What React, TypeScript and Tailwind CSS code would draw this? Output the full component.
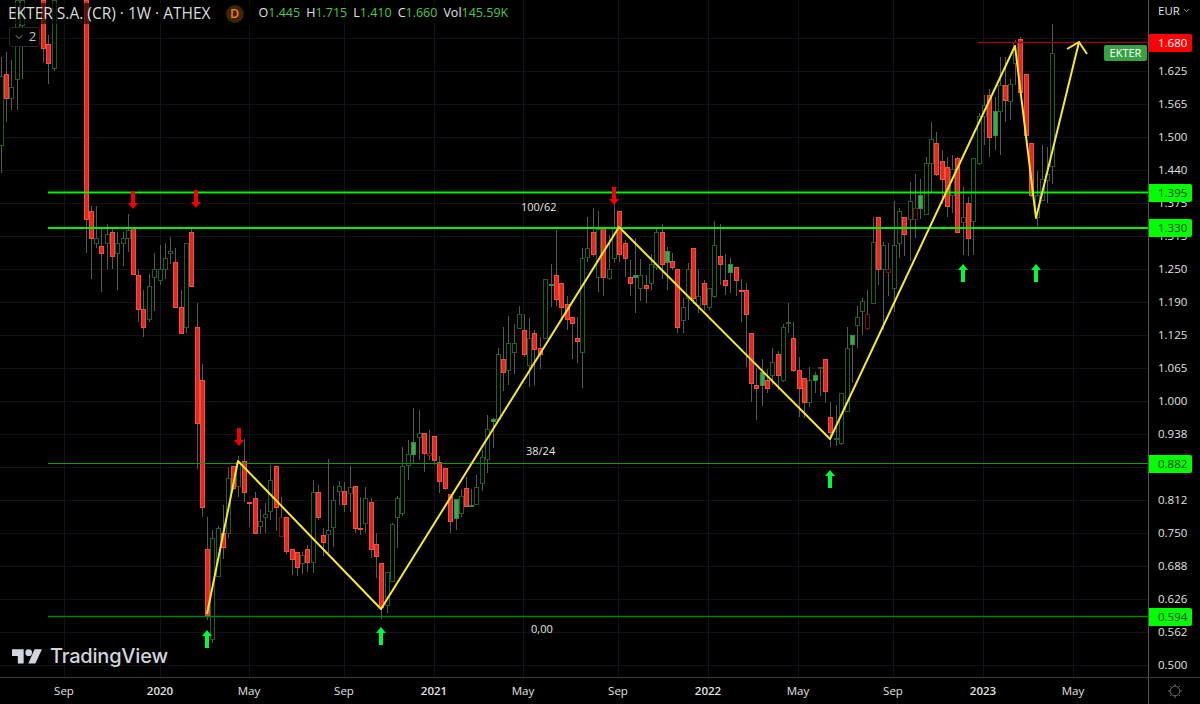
import { ChevronDown } from "lucide-react";

// x, wick top, wick bottom, body top, body bottom, kind
// r = red, g = hollow green, f = filled green, d = hollow dark red
type Candle = [number, number, number, number, number, string];

const candles: Candle[] = [
  [1, 57, 173, 76, 145, "g"], [6, 52, 122, 74, 98, "r"], [11, 60, 110, 87, 98, "g"], [17, 0, 110, 0, 79, "g"],
  [22, 0, 79, 0, 25, "g"], [43, 0, 63, 0, 48, "r"], [48, 35, 84, 44, 63, "r"], [54, 0, 71, 0, 68, "g"],
  [86, 0, 253, 0, 219, "r"], [91, 206, 279, 211, 238, "r"], [96, 206, 248, 238, 243, "g"], [101, 228, 292, 246, 253, "r"],
  [107, 224, 269, 234, 243, "g"], [112, 229, 269, 232, 256, "r"], [117, 232, 290, 243, 253, "g"], [123, 232, 266, 238, 243, "g"],
  [128, 214, 252, 230, 238, "g"], [133, 228, 275, 228, 274, "r"], [138, 269, 322, 275, 309, "r"], [143, 290, 337, 309, 327, "r"],
  [149, 274, 322, 286, 319, "g"], [154, 253, 311, 269, 277, "g"], [160, 245, 285, 269, 280, "g"], [165, 243, 279, 258, 269, "g"],
  [170, 237, 264, 251, 253, "g"], [175, 248, 308, 262, 307, "r"], [181, 290, 333, 307, 333, "r"], [186, 243, 333, 243, 327, "g"],
  [191, 228, 287, 232, 286, "r"], [197, 303, 469, 327, 423, "r"], [202, 364, 517, 380, 507, "r"], [207, 517, 620, 549, 615, "r"],
  [212, 530, 643, 538, 639, "g"], [218, 526, 576, 528, 576, "g"], [223, 505, 559, 533, 547, "r"], [228, 467, 538, 478, 533, "g"],
  [233, 466, 490, 466, 488, "r"], [238, 456, 497, 462, 486, "g"], [244, 439, 502, 461, 492, "r"], [249, 502, 527, 502, 503, "r"],
  [255, 492, 533, 498, 533, "r"], [260, 509, 534, 521, 526, "g"], [265, 503, 533, 514, 517, "g"], [270, 465, 520, 480, 511, "g"],
  [276, 466, 531, 466, 507, "r"], [281, 497, 536, 517, 536, "d"], [286, 517, 554, 517, 551, "r"], [292, 549, 575, 549, 559, "r"],
  [297, 552, 576, 552, 567, "r"], [302, 552, 574, 555, 563, "g"], [307, 545, 572, 549, 562, "r"], [313, 480, 573, 492, 562, "g"],
  [318, 485, 520, 492, 517, "r"], [323, 528, 556, 535, 542, "r"], [328, 459, 553, 530, 534, "g"], [333, 486, 547, 500, 527, "g"],
  [339, 481, 505, 486, 491, "g"], [344, 482, 512, 491, 504, "r"], [350, 466, 512, 487, 493, "g"], [355, 486, 533, 486, 528, "r"],
  [360, 497, 535, 528, 529, "r"], [365, 487, 533, 498, 523, "g"], [371, 498, 558, 502, 549, "r"], [376, 533, 578, 544, 556, "r"],
  [381, 563, 619, 563, 607, "r"], [387, 572, 613, 572, 605, "g"], [392, 523, 581, 524, 581, "g"], [397, 496, 548, 498, 517, "g"],
  [402, 447, 516, 466, 513, "g"], [408, 440, 480, 454, 465, "g"], [413, 408, 464, 442, 454, "f"], [419, 410, 460, 433, 437, "g"],
  [424, 433, 472, 433, 453, "r"], [429, 430, 460, 453, 455, "d"], [434, 436, 465, 436, 460, "r"], [439, 456, 493, 462, 481, "r"],
  [445, 468, 490, 468, 488, "r"], [450, 494, 533, 494, 521, "r"], [456, 499, 530, 499, 518, "f"], [461, 489, 517, 496, 513, "g"],
  [466, 477, 507, 488, 506, "r"], [471, 489, 506, 505, 506, "f"], [476, 475, 505, 487, 504, "g"], [482, 450, 491, 457, 483, "g"],
  [487, 415, 473, 429, 459, "g"], [493, 418, 448, 419, 421, "f"], [498, 348, 420, 354, 419, "g"], [503, 327, 391, 359, 372, "r"],
  [508, 316, 385, 343, 370, "g"], [514, 324, 374, 343, 352, "g"], [519, 306, 328, 314, 328, "g"], [524, 314, 357, 330, 354, "r"],
  [529, 318, 387, 338, 365, "g"], [534, 330, 385, 333, 349, "r"], [540, 337, 369, 348, 354, "r"], [545, 279, 338, 279, 338, "g"],
  [551, 264, 307, 284, 285, "f"], [556, 230, 306, 275, 299, "r"], [561, 283, 320, 283, 307, "r"], [567, 296, 330, 304, 319, "r"],
  [572, 317, 359, 317, 323, "r"], [577, 317, 363, 338, 341, "r"], [582, 248, 388, 258, 352, "g"], [587, 217, 262, 248, 257, "g"],
  [593, 208, 257, 232, 254, "r"], [598, 211, 292, 229, 277, "g"], [603, 228, 296, 228, 277, "r"], [609, 235, 280, 269, 278, "g"],
  [614, 205, 263, 228, 258, "g"], [619, 211, 262, 211, 254, "r"], [625, 240, 277, 243, 258, "r"], [630, 260, 296, 277, 283, "r"],
  [635, 238, 313, 275, 277, "f"], [640, 259, 301, 275, 288, "g"], [646, 275, 303, 285, 288, "r"], [651, 254, 290, 264, 283, "g"],
  [656, 228, 270, 232, 267, "g"], [662, 224, 279, 232, 264, "r"], [667, 247, 290, 251, 262, "f"], [672, 253, 270, 261, 267, "r"],
  [677, 269, 333, 269, 327, "r"], [683, 298, 333, 307, 320, "g"], [688, 263, 320, 269, 298, "g"], [693, 248, 304, 248, 298, "r"],
  [698, 269, 313, 296, 305, "g"], [704, 280, 310, 283, 304, "r"], [709, 288, 310, 288, 307, "g"], [714, 221, 298, 245, 296, "g"],
  [720, 224, 285, 256, 264, "r"], [725, 254, 295, 280, 285, "r"], [730, 258, 293, 264, 272, "f"], [736, 267, 296, 267, 280, "r"],
  [741, 279, 322, 290, 290, "r"], [746, 283, 367, 290, 314, "r"], [751, 333, 402, 333, 383, "r"], [756, 368, 420, 385, 388, "r"],
  [762, 359, 406, 372, 385, "f"], [767, 369, 393, 380, 388, "r"], [772, 348, 385, 362, 375, "g"], [778, 351, 390, 354, 375, "r"],
  [783, 324, 382, 327, 380, "g"], [788, 303, 333, 322, 322, "g"], [793, 322, 372, 338, 370, "r"], [799, 357, 417, 370, 388, "r"],
  [804, 378, 418, 378, 402, "r"], [809, 367, 407, 380, 402, "g"], [815, 372, 393, 375, 380, "f"], [820, 367, 396, 367, 367, "g"],
  [825, 359, 403, 359, 391, "r"], [830, 402, 447, 417, 432, "r"], [836, 405, 446, 438, 439, "g"], [841, 393, 445, 393, 443, "g"],
  [847, 327, 411, 348, 411, "g"], [852, 335, 383, 335, 344, "f"], [857, 306, 348, 317, 325, "g"], [862, 298, 335, 301, 311, "g"],
  [867, 290, 330, 314, 328, "d"], [873, 217, 303, 242, 303, "g"], [878, 217, 285, 217, 269, "r"], [883, 242, 330, 245, 269, "g"],
  [888, 243, 296, 269, 272, "d"], [894, 201, 312, 245, 288, "g"], [899, 208, 258, 211, 243, "g"], [904, 217, 256, 217, 234, "r"],
  [910, 182, 261, 201, 219, "g"], [915, 174, 238, 208, 219, "d"], [920, 179, 219, 195, 208, "f"], [926, 157, 214, 163, 214, "g"],
  [931, 122, 193, 139, 163, "g"], [936, 132, 176, 143, 174, "r"], [942, 150, 204, 161, 179, "r"], [947, 157, 217, 167, 206, "r"],
  [952, 155, 213, 169, 195, "g"], [957, 157, 232, 158, 232, "r"], [963, 187, 255, 217, 222, "g"], [968, 197, 256, 203, 238, "r"],
  [973, 158, 255, 158, 221, "g"], [979, 113, 165, 116, 163, "g"], [984, 95, 145, 105, 116, "g"], [989, 89, 157, 95, 137, "r"],
  [995, 97, 150, 111, 135, "f"], [1000, 57, 155, 85, 111, "g"], [1005, 57, 122, 85, 100, "r"], [1010, 79, 120, 84, 101, "g"],
  [1015, 40, 85, 42, 63, "g"], [1020, 37, 96, 39, 92, "r"], [1026, 74, 137, 74, 135, "r"], [1031, 143, 197, 143, 195, "r"],
  [1037, 171, 227, 195, 217, "g"], [1042, 145, 200, 179, 200, "g"], [1047, 147, 203, 174, 180, "g"], [1052, 24, 184, 53, 166, "g"],
];

const timeTicks = [64, 160, 249, 344, 434, 523, 618, 708, 798, 893, 983, 1073];
const priceGrid = [38, 71, 104, 137, 170, 203, 236, 269, 302, 335, 368, 401, 434, 467, 500, 533, 566, 599, 632, 665];

// the 0.875 row sits fully behind the 0.882 tag, so it stays empty
const prices = ["1.685", "1.625", "1.565", "1.500", "1.440", "1.375", "1.315", "1.250", "1.190", "1.125", "1.065", "1.000", "0.938", "", "0.812", "0.750", "0.688", "0.626", "0.562", "0.500"];

const times = [
  { label: "Sep", cls: "ml-[44px]" },
  { label: "2020", cls: "ml-[56px] font-semibold" },
  { label: "May", cls: "ml-[49px]" },
  { label: "Sep", cls: "ml-[55px]" },
  { label: "2021", cls: "ml-[50px] font-semibold" },
  { label: "May", cls: "ml-[49px]" },
  { label: "Sep", cls: "ml-[55px]" },
  { label: "2022", cls: "ml-[50px] font-semibold" },
  { label: "May", cls: "ml-[50px]" },
  { label: "Sep", cls: "ml-[55px]" },
  { label: "2023", cls: "ml-[50px] font-semibold" },
  { label: "May", cls: "ml-[50px]" },
];

const downArrows = [[133, 191], [196, 190], [614, 187], [239, 428]];
const upArrows = [[207, 630], [381, 627], [830, 470], [963, 264], [1036, 264]];

const zigzag = "207,614 238,461 381,609 619,227 830,439 1015,46 1036,218 1079,42";

function CandleMark({ c }: { c: Candle }) {
  const [x, wt, wb, bt, bb, kind] = c;
  const fill = kind === "r" ? "#de2a1f" : kind === "f" ? "#3fa84a" : "#000";
  const stroke = kind === "r" ? "#f0503c" : kind === "f" ? "#2f8f3a" : kind === "d" ? "#6e1713" : "#1f5f28";
  return (
    <g>
      <line x1={x + 0.5} x2={x + 0.5} y1={wt} y2={wb} stroke="#585858" strokeWidth={1} />
      <rect x={x - 1.5} y={bt + 0.5} width={4} height={Math.max(bb - bt, 1)} fill={fill} stroke={stroke} strokeWidth={1} />
    </g>
  );
}

function PriceTag({ text, cls }: { text: string; cls: string }) {
  return (
    <div className={`absolute left-0 w-[43px] h-[18px] rounded-r-[2px] pl-[9px] text-[11.5px] leading-[18px] ${cls}`}>{text}</div>
  );
}

export default function App() {
  return (
    <div className="w-[1200px] h-[704px] flex flex-col bg-black overflow-hidden font-['Open_Sans',sans-serif] text-[#e2e2e2]">
      <div className="flex h-[677px]">
        <div className="relative w-[1148px]">
          <svg className="absolute inset-0" width={1148} height={677} viewBox="0 0 1148 677">
            {priceGrid.map((y) => (
              <line key={y} x1={0} x2={1148} y1={y + 0.5} y2={y + 0.5} stroke="#12121a" />
            ))}
            {timeTicks.map((x) => (
              <line key={x} x1={x + 0.5} x2={x + 0.5} y1={0} y2={677} stroke="#12121a" />
            ))}
            {candles.map((c) => (
              <CandleMark key={c[0]} c={c} />
            ))}
            <line x1={978} x2={1148} y1={42.5} y2={42.5} stroke="#8f0c0c" strokeWidth={1.5} />
            <line x1={48} x2={1148} y1={192.5} y2={192.5} stroke="#00f000" strokeWidth={2} />
            <line x1={48} x2={1148} y1={228} y2={228} stroke="#00f000" strokeWidth={2} />
            <line x1={48} x2={1148} y1={463.5} y2={463.5} stroke="#129812" strokeWidth={1} />
            <line x1={48} x2={1148} y1={616.5} y2={616.5} stroke="#0a800c" strokeWidth={1.5} />
            <polyline points={zigzag} fill="none" stroke="#f8e833" strokeWidth={2} strokeLinejoin="round" />
            <polyline points="1067,49 1079,42 1087,54" fill="none" stroke="#f8e833" strokeWidth={2} />
            {downArrows.map(([x, y]) => (
              <polygon key={x} points={`${x - 2},${y} ${x + 2},${y} ${x + 2},${y + 12} ${x + 5},${y + 12} ${x},${y + 18} ${x - 5},${y + 12} ${x - 2},${y + 12}`} fill="#f00000" />
            ))}
            {upArrows.map(([x, y]) => (
              <polygon key={x} points={`${x},${y} ${x + 5},${y + 6} ${x + 2},${y + 6} ${x + 2},${y + 18} ${x - 2},${y + 18} ${x - 2},${y + 6} ${x - 5},${y + 6}`} fill="#00f93a" />
            ))}
          </svg>

          <div className="absolute left-[6px] top-[3px] flex items-center h-[21px] bg-black/60 pr-[4px]">
            <span className="pl-[2px] text-[15.5px] text-[#dcdcdc] whitespace-nowrap">EKTER S.A. (CR) · 1W · ATHEX</span>
            <span className="ml-[15px] w-[18px] h-[18px] rounded-full bg-[#3a2508] text-[#ff8000] text-[12.5px] font-semibold leading-[18px] text-center">D</span>
            <div className="ml-[15px] flex gap-[6px] text-[12.5px] whitespace-nowrap">
              <span>O<span className="text-[#4fc64f]">1.445</span></span>
              <span>H<span className="text-[#4fc64f]">1.715</span></span>
              <span>L<span className="text-[#4fc64f]">1.410</span></span>
              <span>C<span className="text-[#4fc64f]">1.660</span></span>
              <span>Vol<span className="text-[#4fc64f]">145.59K</span></span>
            </div>
          </div>

          <div className="absolute left-[9px] top-[27px] w-[31px] h-[20px] flex items-center justify-center gap-[4px] rounded-[3px] border border-[#26262c] bg-black text-[#c4c4c4] text-[13px]">
            <ChevronDown size={12} strokeWidth={1.5} />
            <span>2</span>
          </div>

          <span className="absolute left-[521px] top-[199px] text-[11px] text-[#e6e6e6]">100/62</span>
          <span className="absolute left-[526px] top-[443px] text-[11px] text-[#e6e6e6]">38/24</span>
          <span className="absolute left-[531px] top-[621px] text-[11px] text-[#e6e6e6]">0,00</span>

          <div className="absolute left-[1104px] top-[45px] w-[43px] h-[16px] rounded-[2px] bg-[#37a244] text-white text-[11px] leading-[16px] text-center">EKTER</div>

          <div className="absolute left-[12px] top-[644px] flex items-center gap-[8px]">
            <svg width={30} height={24} viewBox="0 0 36 28" fill="#d2d5de">
              <path d="M14 6H0v8h7v9h7V6z" />
              <circle cx={20} cy={10} r={4} />
              <path d="M28 23h-8.500l7.500-17h9L28 23z" />
            </svg>
            <span className="font-['Inter',sans-serif] font-medium text-[20px] leading-[24px] text-[#d2d5de] tracking-[-0.2px]">TradingView</span>
          </div>
        </div>

        <div className="relative w-[52px] border-l border-[#555] text-[11.5px]">
          <div className="h-[21px] pl-[9px] flex items-center gap-[2px]">
            <span>EUR</span>
            <ChevronDown size={9} strokeWidth={2} />
          </div>
          {prices.map((p, i) => (
            <div key={i} className="h-[33px] pl-[9px] leading-[33px]">{p}</div>
          ))}
          <PriceTag text="1.680" cls="top-[34px] bg-[#ff0000] text-white" />
          <PriceTag text="1.395" cls="top-[184px] bg-[#00ff00] text-[#0c3a0c]" />
          <PriceTag text="1.330" cls="top-[219px] bg-[#00ff00] text-[#0c3a0c]" />
          <PriceTag text="0.882" cls="top-[455px] bg-[#00ff00] text-[#0c3a0c]" />
          <PriceTag text="0.594" cls="top-[608px] bg-[#00ff00] text-[#0c3a0c]" />
        </div>
      </div>

      <div className="flex h-[27px] border-t border-[#3c3c3c]">
        <div className="w-[1148px] flex items-center text-[11.5px]">
          {times.map((t, i) => (
            <span key={i} className={`w-[40px] text-center ${t.cls}`}>{t.label}</span>
          ))}
        </div>
        <div className="w-[52px] border-l border-[#555] flex items-center justify-center">
          <svg width={16} height={16} viewBox="0 0 16 16" fill="none" stroke="#6a6a6a" strokeWidth={1}>
            <circle cx={8} cy={8} r={4.800} />
            <path d="M8 1v2M8 13v2M1 8h2M13 8h2M3 3l1.500 1.500M11.500 11.500L13 13M13 3l-1.500 1.500M4.500 11.500L3 13" />
          </svg>
        </div>
      </div>
    </div>
  );
}
